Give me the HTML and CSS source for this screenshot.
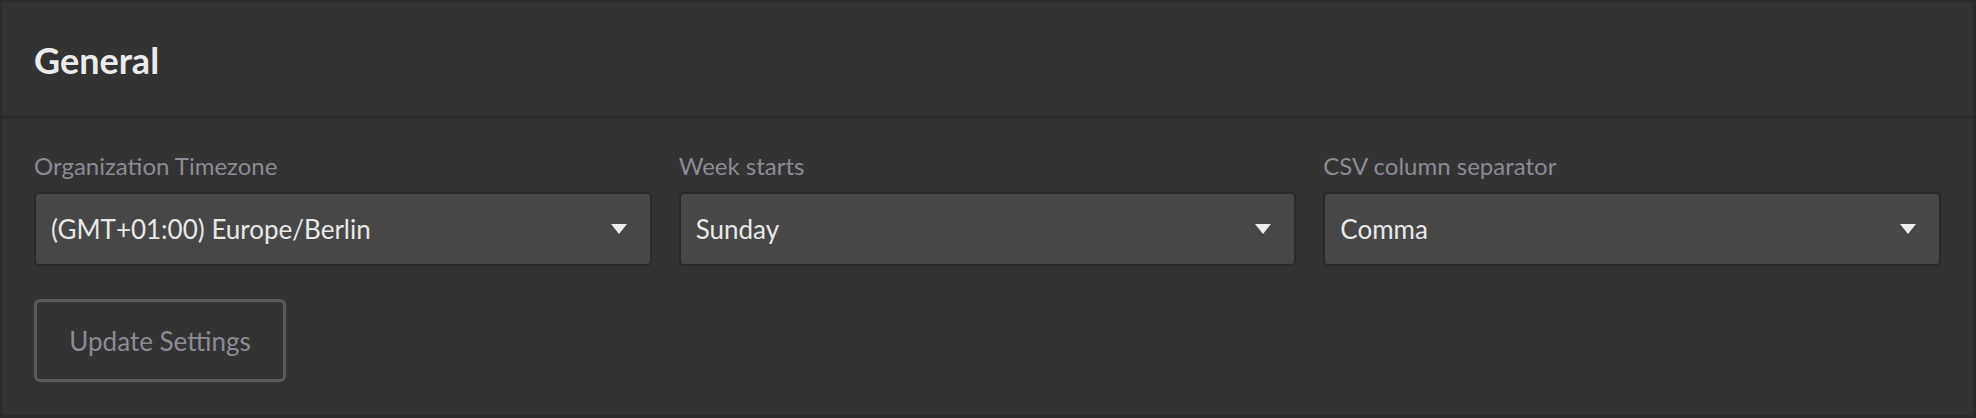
FILE: index.html
```html
<!DOCTYPE html>
<html lang="en">
<head>
<meta charset="utf-8">
<title>General Settings</title>
<link rel="stylesheet" href="styles.css">
</head>
<body>
<section class="card">
  <header class="card-header">
    <h2 class="card-title">General</h2>
  </header>
  <div class="card-body">
    <div class="fields">
      <div class="field">
        <label class="field-label">Organization Timezone</label>
        <div class="select">
          <span class="select-value">(GMT+01:00) Europe/Berlin</span>
          <svg class="select-arrow" viewBox="0 0 16 10" width="16" height="10"><path d="M0 0H16L8 10Z" fill="currentColor"/></svg>
        </div>
      </div>
      <div class="field">
        <label class="field-label">Week starts</label>
        <div class="select">
          <span class="select-value">Sunday</span>
          <svg class="select-arrow" viewBox="0 0 16 10" width="16" height="10"><path d="M0 0H16L8 10Z" fill="currentColor"/></svg>
        </div>
      </div>
      <div class="field">
        <label class="field-label">CSV column separator</label>
        <div class="select">
          <span class="select-value">Comma</span>
          <svg class="select-arrow" viewBox="0 0 16 10" width="16" height="10"><path d="M0 0H16L8 10Z" fill="currentColor"/></svg>
        </div>
      </div>
    </div>
    <div class="actions">
      <button class="btn-update" type="button">Update Settings</button>
    </div>
  </div>
</section>
</body>
</html>
```

FILE: styles.css
```css
html, body {
  margin: 0;
  padding: 0;
}
body {
  background: #2b2b2b;
  font-family: Lato, "Open Sans", "Liberation Sans", sans-serif;
  padding: 0 1px 1px 0;
  height: 418px;
  box-sizing: border-box;
}
.card {
  background: #333333;
  border: 2px solid #2b2b2b;
  border-radius: 5px;
  height: 417px;
  box-sizing: border-box;
}
.card-header {
  padding: 36px 32px 34px;
  border-bottom: 2px solid #2a2a2a;
}
.card-title {
  margin: 0;
  font-size: 36px;
  line-height: 44px;
  font-weight: 700;
  color: #ececec;
}
.card-body {
  padding: 31px 32px 0;
}
.fields {
  display: grid;
  grid-template-columns: repeat(3, 1fr);
  column-gap: 27px;
}
.field {
  display: flex;
  flex-direction: column;
}
.field-label {
  font-size: 24px;
  line-height: 33px;
  color: #8b8b93;
  margin-bottom: 10px;
}
.select {
  display: flex;
  align-items: center;
  justify-content: space-between;
  height: 74px;
  box-sizing: border-box;
  background: #474747;
  border: 2px solid #2a2a2a;
  border-radius: 5px;
  padding: 0 23px 0 15px;
}
.select-value {
  font-size: 26px;
  color: #e8e8e8;
}
.select-arrow {
  color: #eeeeee;
  display: block;
}
.actions {
  margin-top: 33px;
}
.btn-update {
  font-family: inherit;
  font-size: 26px;
  color: #8c8c94;
  background: transparent;
  border: 3px solid #5a5a5a;
  border-radius: 6px;
  width: 252px;
  height: 83px;
  padding: 0;
  cursor: pointer;
}
```
